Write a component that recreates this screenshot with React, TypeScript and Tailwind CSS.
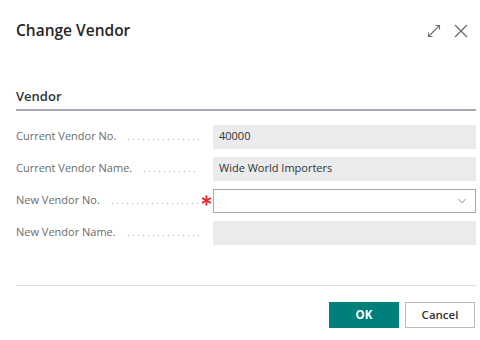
import { ChevronDown } from "lucide-react";

const FONT = { fontFamily: '"Open Sans", "Noto Sans", sans-serif' };

type Field = {
  label: string;
  value?: string;
  editable?: boolean;
  required?: boolean;
};

const fields: Field[] = [
  { label: "Current Vendor No.", value: "40000" },
  { label: "Current Vendor Name.", value: "Wide World Importers" },
  { label: "New Vendor No.", editable: true, required: true },
  { label: "New Vendor Name." },
];

function ExpandIcon() {
  return (
    <svg width="14" height="14" viewBox="0 0 14 14" fill="none" stroke="#707070" strokeWidth="1.1">
      <path d="M1.5 12.5 L12.5 1.5" />
      <path d="M8.5 1.5 H12.5 V5.5" />
      <path d="M1.5 8.5 V12.5 H5.5" />
    </svg>
  );
}

function CloseIcon() {
  return (
    <svg width="14" height="14" viewBox="0 0 14 14" fill="none" stroke="#6b6b6b" strokeWidth="1.2">
      <path d="M1 1 L13 13" />
      <path d="M13 1 L1 13" />
    </svg>
  );
}

function Asterisk() {
  return (
    <svg width="11" height="11" viewBox="0 0 12 12" fill="none" stroke="#e3232b" strokeWidth="2">
      <path d="M6 0.5 V11.5" />
      <path d="M1.2 3.2 L10.8 8.8" />
      <path d="M10.8 3.2 L1.2 8.8" />
    </svg>
  );
}

function FieldRow({ field }: { field: Field }) {
  return (
    <div className="flex items-center h-[24px]">
      <div className="flex items-center w-[183px] overflow-hidden">
        <span className="text-[11px] text-[#6a6a6a] whitespace-nowrap">{field.label}</span>
        <span className="flex-1 ml-[10px] h-[3px] translate-y-[3px] bg-[radial-gradient(circle,#c8c8c8_0.7px,transparent_1.1px)] bg-[length:5px_3px] bg-repeat-x" />
      </div>
      <div className="w-[14px] flex justify-center">{field.required && <Asterisk />}</div>
      {field.editable ? (
        <div className="flex-1 h-[24px] border border-[#a8a8a8] bg-white flex items-center justify-end pr-[6px]">
          <ChevronDown size={14} strokeWidth={1.3} color="#6b6b6b" />
        </div>
      ) : (
        <div className="flex-1 h-[24px] bg-[#eaebec] flex items-center px-[6px] text-[11px] text-[#333]">
          {field.value}
        </div>
      )}
    </div>
  );
}

export default function App() {
  return (
    <div style={FONT} className="w-[480px] h-[340px] bg-white pl-[16px] pr-[4px] pt-[18px] text-[#212121]">
      <div className="flex items-center justify-between h-[26px]">
        <h1 className="text-[15.5px] font-semibold text-[#262626]">Change Vendor</h1>
        <div className="flex items-center gap-[13px] mr-[8px]">
          <ExpandIcon />
          <CloseIcon />
        </div>
      </div>

      <div className="mt-[43px] border-b-2 border-[#a3a9b0] pb-[2px]">
        <h2 className="text-[13px] font-semibold text-[#333]">Vendor</h2>
      </div>

      <div className="flex flex-col gap-[8px] mt-[14px]">
        {fields.map((f, k) => (
          <FieldRow key={k} field={f} />
        ))}
      </div>

      <div className="mt-[40px] border-t border-[#dcdcdc]" />

      <div className="flex justify-end gap-[6px] mt-[16px] pr-[1px]">
        <button className="w-[70px] h-[26px] bg-[#00807d] text-white text-[11.5px] font-bold">OK</button>
        <button className="w-[70px] h-[26px] bg-white border border-[#bcbcbc] text-[#333] text-[11.5px] font-semibold">
          Cancel
        </button>
      </div>
    </div>
  );
}
